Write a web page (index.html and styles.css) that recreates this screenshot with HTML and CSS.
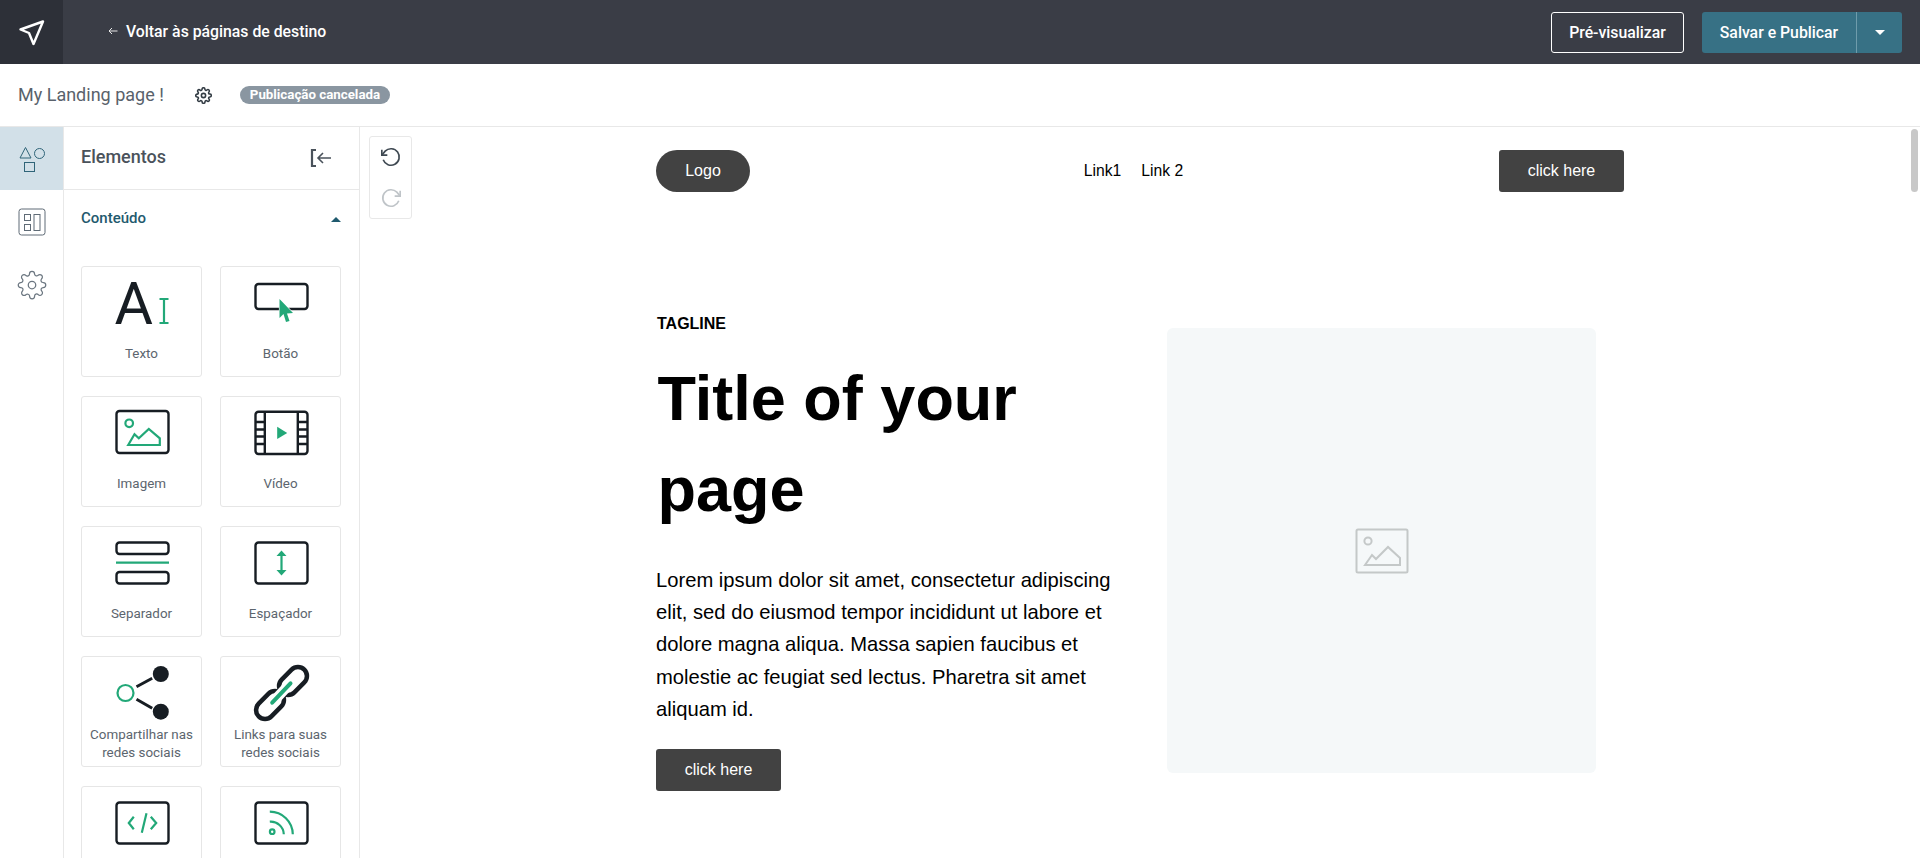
FILE: index.html
```html
<!DOCTYPE html>
<html lang="en">
  <head>
    <meta charset="UTF-8" />
    <title>My Landing page</title>
    <link rel="stylesheet" href="styles.css">
  </head>
  <body>
    <svg class="defs" width="0" height="0">
      <symbol id="gear" viewBox="0 0 24 24">
        <path d="M12 15a3 3 0 1 0 0-6 3 3 0 0 0 0 6z" />
        <path d="M19.4 15a1.65 1.65 0 0 0 .33 1.82l.06.06a2 2 0 0 1 0 2.83 2 2 0 0 1-2.83 0l-.06-.06a1.65 1.65 0 0 0-1.82-.33 1.65 1.65 0 0 0-1 1.51V21a2 2 0 0 1-2 2 2 2 0 0 1-2-2v-.09A1.65 1.65 0 0 0 9 19.4a1.65 1.65 0 0 0-1.82.33l-.06.06a2 2 0 0 1-2.83 0 2 2 0 0 1 0-2.83l.06-.06a1.65 1.65 0 0 0 .33-1.82 1.65 1.65 0 0 0-1.51-1H3a2 2 0 0 1-2-2 2 2 0 0 1 2-2h.09A1.65 1.65 0 0 0 4.6 9a1.65 1.65 0 0 0-.33-1.82l-.06-.06a2 2 0 0 1 0-2.83 2 2 0 0 1 2.83 0l.06.06a1.65 1.65 0 0 0 1.82.33H9a1.65 1.65 0 0 0 1-1.51V3a2 2 0 0 1 2-2 2 2 0 0 1 2 2v.09a1.65 1.65 0 0 0 1 1.51 1.65 1.65 0 0 0 1.82-.33l.06-.06a2 2 0 0 1 2.83 0 2 2 0 0 1 0 2.83l-.06.06a1.65 1.65 0 0 0-.33 1.82V9a1.65 1.65 0 0 0 1.51 1H21a2 2 0 0 1 2 2 2 2 0 0 1-2 2h-.09a1.65 1.65 0 0 0-1.51 1z" />
      </symbol>
    </svg>

    <header class="topbar">
      <div class="brand">
        <svg width="40" height="40" viewBox="0 0 40 40" class="brand-icon">
          <path d="M8.5 17.5 31 9.5 21.5 32 17 21z" />
        </svg>
      </div>
      <a class="back-link">
        <svg width="10" height="10" viewBox="0 0 10 10" class="back-arrow">
          <path d="M9.5 5H1M4 2 1 5l3 3" />
        </svg>
        Voltar às páginas de destino
      </a>
      <div class="top-actions">
        <button class="btn-preview">Pré-visualizar</button>
        <div class="btn-publish">
          <span class="publish-label">Salvar e Publicar</span>
          <span class="publish-caret"><i class="caret-down"></i></span>
        </div>
      </div>
    </header>

    <div class="subbar">
      <span class="page-name">My Landing page !</span>
      <svg class="sub-gear" width="17" height="17"><use href="#gear" /></svg>
      <span class="status-badge">Publicação cancelada</span>
    </div>

    <div class="workspace">
      <nav class="rail">
        <div class="rail-item active">
          <svg width="30" height="30" viewBox="0 0 30 30" class="rail-shapes">
            <path d="M8.5 3.5 14 14H3z" />
            <circle cx="22.5" cy="9.5" r="5" />
            <rect x="7.5" y="18.5" width="10" height="9" />
          </svg>
        </div>
        <div class="rail-item">
          <svg width="30" height="30" viewBox="0 0 30 30" class="rail-line">
            <rect x="2" y="2" width="26" height="26" rx="2.5" />
            <rect x="7.5" y="7.5" width="6" height="6" />
            <rect x="7.5" y="17.5" width="6" height="6" />
            <rect x="17" y="7.5" width="6" height="16" />
          </svg>
        </div>
        <div class="rail-item">
          <svg width="30" height="30" class="rail-gear"><use href="#gear" /></svg>
        </div>
      </nav>

      <aside class="panel">
        <div class="panel-head">
          <span class="panel-title">Elementos</span>
          <svg width="22" height="20" viewBox="0 0 22 20" class="collapse-icon">
            <path class="bracket" d="M6 2H2v16h4" />
            <path d="M21 10H8M13 5l-5 5 5 5" />
          </svg>
        </div>
        <div class="section-head">
          <span class="section-title">Conteúdo</span>
          <i class="caret-up"></i>
        </div>
        <div class="element-grid">
          <div class="element-card">
            <svg class="el-icon" viewBox="0 0 60 60">
              <text x="2.5" y="51" class="icon-letter">A</text>
              <path class="green" d="M47.5 26h9M52 26v24M47.5 50h9" />
            </svg>
            <span class="el-label">Texto</span>
          </div>
          <div class="element-card">
            <svg class="el-icon" viewBox="0 0 60 60">
              <rect class="dark" x="4.5" y="11" width="52" height="25" rx="3" />
              <path class="cursor" d="M28.5 26 42 40 36 40.5 38.5 48 35 49 32.5 41 28.5 45z" />
            </svg>
            <span class="el-label">Botão</span>
          </div>
          <div class="element-card">
            <svg class="el-icon" viewBox="0 0 60 60">
              <rect class="dark" x="4.5" y="8" width="52" height="42" rx="3" />
              <circle class="green" cx="17.2" cy="20.3" r="3.8" />
              <path class="green" d="M16.2 42 22.5 31.3 26.8 35.3 36.8 26 47.8 35.3V42z" />
            </svg>
            <span class="el-label">Imagem</span>
          </div>
          <div class="element-card">
            <svg class="el-icon" viewBox="0 0 60 60">
              <rect class="dark" x="4.5" y="8.7" width="52" height="42.3" rx="3" />
              <path class="dark" d="M13.8 9v42M46.8 9v42M4.5 19h9M4.5 26.5h9M4.5 33.5h9M4.5 41h9M47 19h9.5M47 26.5h9.5M47 33.5h9.5M47 41h9.5" />
              <path class="green-fill" d="M26.2 23.7 36.2 30 26.2 36z" />
            </svg>
            <span class="el-label">Vídeo</span>
          </div>
          <div class="element-card">
            <svg class="el-icon" viewBox="0 0 60 60">
              <rect class="dark" x="4.5" y="9.5" width="52" height="11.5" rx="3" />
              <path class="green" d="M4 29.7h53" />
              <rect class="dark" x="4.5" y="39" width="52" height="11.5" rx="3" />
            </svg>
            <span class="el-label">Separador</span>
          </div>
          <div class="element-card">
            <svg class="el-icon" viewBox="0 0 60 60">
              <rect class="dark" x="4.5" y="9.5" width="52" height="41" rx="3" />
              <path class="green" d="M30.5 20v20" />
              <path class="green-fill" d="M30.5 17.5 35.5 23H25.5zM30.5 42.5 25.5 37H35.5z" />
            </svg>
            <span class="el-label">Espaçador</span>
          </div>
          <div class="element-card">
            <svg class="el-icon" viewBox="0 0 60 60">
              <circle class="green" cx="13.5" cy="30" r="8" />
              <path class="dark share-line" d="M24.5 23.7 40.2 15.3M24.5 36.3 40.2 45.3" />
              <circle class="dark-fill" cx="48.8" cy="11" r="8" />
              <circle class="dark-fill" cx="48.8" cy="48.7" r="8" />
            </svg>
            <span class="el-label">Compartilhar nas redes sociais</span>
          </div>
          <div class="element-card">
            <svg class="el-icon" viewBox="0 0 60 60">
              <rect class="link-ring" x="-16" y="-9" width="32" height="18" rx="9" transform="translate(42 18) rotate(-45)" />
              <rect class="link-ring" x="-16" y="-9" width="32" height="18" rx="9" transform="translate(19 42) rotate(-45)" />
              <path class="link-halo" d="M21.2 39.7 39.5 20.3" />
              <path class="link-bar" d="M21.2 39.7 39.5 20.3" />
            </svg>
            <span class="el-label">Links para suas redes sociais</span>
          </div>
          <div class="element-card">
            <svg class="el-icon" viewBox="0 0 60 60">
              <rect class="dark" x="4.5" y="9.5" width="52" height="41" rx="3" />
              <path class="green" d="M21.8 23.7 16.8 30 21.8 36.3M38.8 23.7 44.2 30 38.8 36.3M34.5 20.3 29.8 39.7" />
            </svg>
          </div>
          <div class="element-card">
            <svg class="el-icon" viewBox="0 0 60 60">
              <rect class="dark" x="4.5" y="9.5" width="52" height="41" rx="3" />
              <circle class="green" cx="21.2" cy="38.7" r="2.3" />
              <path class="green" d="M18.8 18.7A23 23 0 0 1 41.8 41.3M18.8 28.7A13 13 0 0 1 32.8 41.3" />
            </svg>
          </div>
        </div>
      </aside>

      <main class="canvas">
        <div class="history">
          <svg width="22" height="22" viewBox="0 0 24 24" class="history-icon">
            <path d="M2 4v6h6" />
            <path d="M3.5 15a9 9 0 1 0 2.1-9.4L2 10" />
          </svg>
          <svg width="22" height="22" viewBox="0 0 24 24" class="history-icon off">
            <path d="M22 4v6h-6" />
            <path d="M20.5 15a9 9 0 1 1-2.1-9.4L22 10" />
          </svg>
        </div>
        <div class="scroll-thumb"></div>

        <div class="lp">
          <div class="lp-nav">
            <span class="lp-logo">Logo</span>
            <div class="lp-links">
              <span>Link1</span>
              <span>Link 2</span>
            </div>
            <span class="lp-btn">click here</span>
          </div>

          <section class="hero">
            <div class="hero-text">
              <div class="tagline">TAGLINE</div>
              <h1>Title of your page</h1>
              <p>Lorem ipsum dolor sit amet, consectetur adipiscing elit, sed do eiusmod tempor incididunt ut labore et dolore magna aliqua. Massa sapien faucibus et molestie ac feugiat sed lectus. Pharetra sit amet aliquam id.</p>
              <span class="lp-btn">click here</span>
            </div>
            <div class="hero-image">
              <svg width="54" height="46" viewBox="0 0 54 46" class="placeholder-icon">
                <rect x="1.5" y="1.5" width="51" height="43" rx="1.5" />
                <circle cx="13" cy="13" r="3.6" />
                <path d="M10 37 17 27 21 31 33 19 45 30V37z" />
              </svg>
            </div>
          </section>
        </div>
      </main>
    </div>
  </body>
</html>
```

FILE: styles.css
```css
* {
    box-sizing: border-box;
}

html, body {
    margin: 0;
    height: 858px;
    overflow: hidden;
}

body {
    font-family: Roboto, "Liberation Sans", sans-serif;
    background-color: #fff;
    color: #333;
}

.defs {
    position: absolute;
}

/* Top bar */
.topbar {
    display: flex;
    align-items: center;
    height: 64px;
    background-color: #3a3d46;
    color: #fff;
}

.brand {
    display: flex;
    align-items: center;
    justify-content: center;
    width: 63px;
    height: 64px;
    background-color: #2d3038;
}

.brand-icon {
    fill: none;
    stroke: #fff;
    stroke-width: 2.4;
    stroke-linejoin: round;
}

.back-link {
    display: flex;
    align-items: center;
    margin-left: 45px;
    margin-bottom: 2px;
    font-size: 15.8px;
    font-weight: 500;
}

.back-arrow {
    margin-right: 8px;
    fill: none;
    stroke: #e8e8e8;
    stroke-width: 1;
}

.top-actions {
    display: flex;
    align-items: center;
    gap: 18px;
    margin-left: auto;
    margin-right: 18px;
}

.btn-preview {
    width: 133px;
    height: 41px;
    padding: 0;
    background: transparent;
    border: 1px solid #fff;
    border-radius: 3px;
    color: #fff;
    font-family: inherit;
    font-size: 15.8px;
    font-weight: 500;
}

.btn-publish {
    display: flex;
    width: 200px;
    height: 41px;
    background-color: #377185;
    border-radius: 3px;
    font-size: 15.8px;
    font-weight: 500;
}

.publish-label {
    display: flex;
    align-items: center;
    justify-content: center;
    width: 155px;
    border-right: 1px solid #6f9cab;
}

.publish-caret {
    display: flex;
    flex: 1;
    align-items: center;
    justify-content: center;
}

.caret-down {
    width: 0;
    height: 0;
    border-left: 5px solid transparent;
    border-right: 5px solid transparent;
    border-top: 5px solid #fff;
}

.caret-up {
    width: 0;
    height: 0;
    border-left: 5px solid transparent;
    border-right: 5px solid transparent;
    border-bottom: 5px solid #1f5a6e;
}

/* Page name bar */
.subbar {
    display: flex;
    align-items: center;
    height: 63px;
    padding-left: 18px;
    border-bottom: 1px solid #e8e8e8;
}

.page-name {
    margin-bottom: 2px;
    font-size: 18px;
    color: #59626b;
}

.sub-gear {
    margin-left: 31px;
    fill: none;
    stroke: #333c44;
    stroke-width: 2.2;
}

.status-badge {
    margin-left: 28px;
    padding: 0 10px;
    height: 18px;
    line-height: 18px;
    border-radius: 9px;
    background-color: #8a96a1;
    color: #fff;
    font-size: 13.3px;
    font-weight: 700;
}

/* Workspace */
.workspace {
    display: flex;
    height: 731px;
}

.rail {
    width: 64px;
    flex-shrink: 0;
    border-right: 1px solid #e8e8e8;
}

.rail-item {
    display: flex;
    align-items: center;
    justify-content: center;
    height: 63px;
}

.rail-item.active {
    background-color: #d2e0e8;
}

.rail-shapes {
    fill: none;
    stroke: #2f6478;
    stroke-width: 1;
}

.rail-line {
    fill: none;
    stroke: #5f6b76;
    stroke-width: 1;
}

.rail-gear {
    fill: none;
    stroke: #6b7680;
    stroke-width: 1;
}

.panel {
    width: 296px;
    flex-shrink: 0;
    overflow: hidden;
    border-right: 1px solid #e8e8e8;
}

.panel-head {
    display: flex;
    align-items: center;
    justify-content: space-between;
    height: 63px;
    padding: 0 27px 0 17px;
    border-bottom: 1px solid #e8e8e8;
    font-size: 18px;
    font-weight: 500;
    color: #4a525b;
}

.panel-title {
    margin-bottom: 4px;
}

.collapse-icon {
    fill: none;
    stroke: #4a525b;
    stroke-width: 1.6;
}

.collapse-icon .bracket {
    stroke-width: 2.2;
}

.section-head {
    display: flex;
    align-items: center;
    justify-content: space-between;
    height: 58px;
    padding: 0 18px 0 17px;
    font-size: 15px;
    font-weight: 500;
    color: #1f5a6e;
}

.section-title {
    margin-bottom: 2px;
}

.element-grid {
    display: grid;
    grid-template-columns: 121px 121px;
    grid-auto-rows: 111px;
    gap: 19px 18px;
    padding: 18px 17px;
}

.element-card {
    display: flex;
    flex-direction: column;
    align-items: center;
    padding-top: 6px;
    border: 1px solid #e6e6e6;
    border-radius: 3px;
}

.el-icon {
    width: 60px;
    height: 60px;
    flex-shrink: 0;
    overflow: visible;
}

.el-label {
    display: flex;
    align-items: center;
    justify-content: center;
    height: 36px;
    margin-top: 3px;
    padding: 0 4px;
    font-size: 13.4px;
    line-height: 18px;
    text-align: center;
    color: #5c656e;
}

.icon-letter {
    font-family: Roboto, sans-serif;
    font-size: 59px;
    fill: #171d23;
}

.dark {
    fill: none;
    stroke: #171d23;
    stroke-width: 2.4;
}

.share-line {
    stroke-width: 3;
}

.dark-fill {
    fill: #171d23;
}

.green {
    fill: none;
    stroke: #22a878;
    stroke-width: 2.2;
}

.green-fill {
    fill: #22a878;
}

.cursor {
    fill: #22a878;
    stroke: #fff;
    stroke-width: 1.2;
    paint-order: stroke;
}

.link-ring {
    fill: none;
    stroke: #171d23;
    stroke-width: 4.5;
}

.link-halo {
    fill: none;
    stroke: #fff;
    stroke-width: 10;
}

.link-bar {
    fill: none;
    stroke: #22a878;
    stroke-width: 4;
    stroke-linecap: round;
}

/* Canvas */
.canvas {
    position: relative;
    flex: 1;
    overflow: hidden;
}

.history {
    position: absolute;
    top: 9px;
    left: 9px;
    display: flex;
    flex-direction: column;
    align-items: center;
    gap: 19px;
    width: 43px;
    height: 83px;
    padding-top: 9px;
    border: 1px solid #e8e8e8;
    border-radius: 3px;
}

.history-icon {
    fill: none;
    stroke: #3f4952;
    stroke-width: 1.8;
}

.history-icon.off {
    stroke: #bfc4c8;
}

.scroll-thumb {
    position: absolute;
    top: 2px;
    right: 2px;
    width: 7px;
    height: 63px;
    border-radius: 4px;
    background-color: #c8c8c8;
}

.lp {
    width: 968px;
    margin: 0 auto;
    padding-top: 23px;
    font-family: "Liberation Sans", Arial, sans-serif;
    color: #000;
}

.lp-nav {
    display: flex;
    align-items: center;
    justify-content: space-between;
}

.lp-logo {
    width: 94px;
    height: 42px;
    line-height: 42px;
    text-align: center;
    border-radius: 21px;
    background-color: #424242;
    color: #fff;
    font-size: 16px;
}

.lp-links {
    display: flex;
    gap: 20px;
    padding-left: 18px;
    font-size: 15.7px;
}

.lp-btn {
    display: block;
    width: 125px;
    height: 42px;
    line-height: 42px;
    text-align: center;
    border-radius: 3px;
    background-color: #424242;
    color: #fff;
    font-size: 16px;
}

.hero {
    display: grid;
    grid-template-columns: 475px 429px;
    column-gap: 36px;
    padding-top: 122px;
}

.tagline {
    padding-left: 1px;
    font-size: 16px;
    font-weight: 700;
    line-height: 19px;
}

.hero-text h1 {
    margin: 20px 0 29px;
    padding-left: 1.5px;
    font-size: 63px;
    font-weight: 700;
    line-height: 91px;
}

.hero-text p {
    margin: 0 0 24px;
    font-size: 20.2px;
    line-height: 32.2px;
}

.hero-image {
    display: flex;
    align-items: center;
    justify-content: center;
    height: 445px;
    margin-top: 14px;
    border-radius: 6px;
    background-color: #f5f8f9;
}

.placeholder-icon {
    fill: none;
    stroke: #c4c8c8;
    stroke-width: 2;
}
```
